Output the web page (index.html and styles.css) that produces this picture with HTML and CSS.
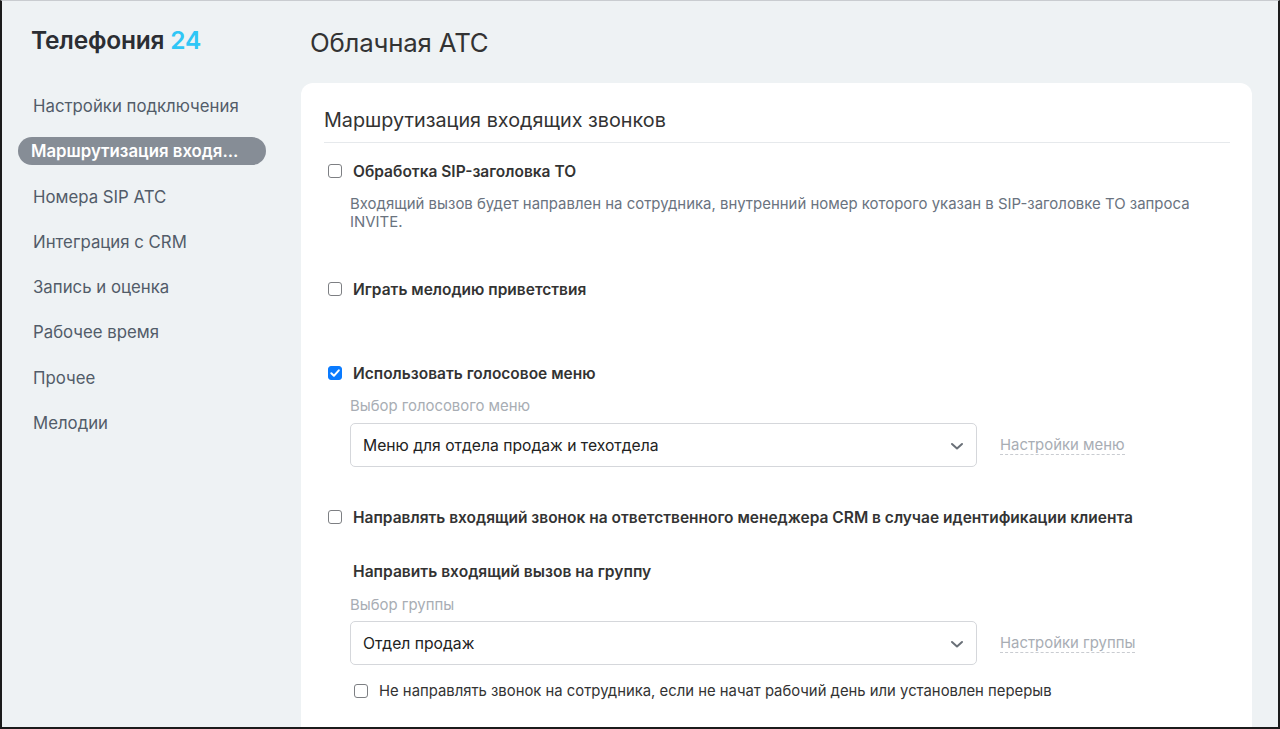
FILE: index.html
```html
<!DOCTYPE html>
<html lang="ru">
<head>
<meta charset="utf-8">
<title>Облачная АТС</title>
<link rel="stylesheet" href="styles.css">
</head>
<body>
<div class="frame">
  <aside class="sidebar">
    <div class="logo">Телефония <span class="logo-num">24</span></div>
    <nav class="nav">
      <a class="nav-item">Настройки подключения</a>
      <a class="nav-item active">Маршрутизация входя...</a>
      <a class="nav-item">Номера SIP АТС</a>
      <a class="nav-item">Интеграция с CRM</a>
      <a class="nav-item">Запись и оценка</a>
      <a class="nav-item">Рабочее время</a>
      <a class="nav-item">Прочее</a>
      <a class="nav-item">Мелодии</a>
    </nav>
  </aside>
  <main class="main">
    <h1 class="page-title">Облачная АТС</h1>
    <section class="card">
      <h2 class="card-title">Маршрутизация входящих звонков</h2>

      <label class="check-row sec-1"><input type="checkbox" class="cb"><span class="check-label">Обработка SIP-заголовка ТО</span></label>
      <p class="desc">Входящий вызов будет направлен на сотрудника, внутренний номер которого указан в SIP-заголовке ТО запроса INVITE.</p>

      <label class="check-row sec-2"><input type="checkbox" class="cb"><span class="check-label">Играть мелодию приветствия</span></label>

      <label class="check-row sec-3"><input type="checkbox" class="cb" checked><span class="check-label">Использовать голосовое меню</span></label>
      <div class="field">
        <div class="field-label">Выбор голосового меню</div>
        <div class="field-row">
          <div class="select"><span>Меню для отдела продаж и техотдела</span>
            <svg class="chev" width="14" height="9" viewBox="0 0 14 9"><path d="M2 2 L7 6.5 L12 2" fill="none" stroke="#6a7078" stroke-width="2" stroke-linecap="round" stroke-linejoin="round"/></svg>
          </div>
          <a class="dash-link">Настройки меню</a>
        </div>
      </div>

      <label class="check-row sec-4"><input type="checkbox" class="cb"><span class="check-label">Направлять входящий звонок на ответственного менеджера CRM в случае идентификации клиента</span></label>

      <div class="group-title">Направить входящий вызов на группу</div>
      <div class="field field-group">
        <div class="field-label">Выбор группы</div>
        <div class="field-row">
          <div class="select"><span>Отдел продаж</span>
            <svg class="chev" width="14" height="9" viewBox="0 0 14 9"><path d="M2 2 L7 6.5 L12 2" fill="none" stroke="#6a7078" stroke-width="2" stroke-linecap="round" stroke-linejoin="round"/></svg>
          </div>
          <a class="dash-link">Настройки группы</a>
        </div>
      </div>
      <label class="check-row small-row"><input type="checkbox" class="cb"><span class="small-label">Не направлять звонок на сотрудника, если не начат рабочий день или установлен перерыв</span></label>
    </section>
  </main>
</div>
</body>
</html>
```

FILE: styles.css
```css
* { box-sizing: border-box; }
html, body { margin: 0; padding: 0; height: 100%; overflow: hidden; }
body {
  font-family: Inter, "Noto Sans", sans-serif;
  background: #eef2f4;
  color: #333;
}
.frame {
  height: 729px;
  display: flex;
  border-left: 2px solid #1b1b1b;
  border-right: 2px solid #1b1b1b;
  border-bottom: 2px solid #1b1b1b;
  border-top: 1px solid #c9ccd0;
  overflow: hidden;
}
.sidebar {
  width: 299px;
  flex: none;
  padding: 23px 0 0 16px;
}
.logo {
  font-size: 24.5px;
  font-weight: 600;
  color: #2b2e33;
  padding-left: 13px;
  line-height: 32px;
  letter-spacing: -0.2px;
}
.logo-num { color: #2fc6f6; }
.nav {
  display: flex;
  flex-direction: column;
  margin-top: 36px;
  gap: 17.3px;
}
.nav-item {
  display: block;
  width: 248px;
  height: 28px;
  line-height: 28px;
  padding-left: 15px;
  font-size: 16.8px;
  color: #525c69;
  border-radius: 14px;
  white-space: nowrap;
}
.nav-item.active {
  background: #868d96;
  color: #fff;
  font-weight: 600;
  padding-left: 13px;
}
.main {
  flex: 1;
  display: flex;
  flex-direction: column;
  padding-right: 26px;
}
.page-title {
  margin: 26px 0 0 9px;
  font-size: 25.8px;
  font-weight: 400;
  line-height: 32px;
  color: #333;
  letter-spacing: -0.2px;
}
.card {
  margin-top: 24px;
  flex: 1;
  background: #fff;
  border-radius: 12px 12px 0 0;
  padding: 0 22px 0 23px;
}
.card-title {
  margin: 25px 0 0;
  font-size: 19.8px;
  font-weight: 400;
  line-height: 24px;
  color: #333;
  padding-bottom: 10px;
  border-bottom: 1px solid #e6e9ec;
}
.check-row {
  display: flex;
  align-items: center;
  height: 20px;
  padding-left: 4px;
}
.cb {
  appearance: none;
  -webkit-appearance: none;
  margin: 0 11px 0 0;
  width: 14px;
  height: 14px;
  border: 1.2px solid #7d7f83;
  border-radius: 3px;
  background: #fff;
  flex: none;
}
.cb:checked {
  background: #0a7bff url("data:image/svg+xml,%3Csvg xmlns='http://www.w3.org/2000/svg' viewBox='0 0 14 14'%3E%3Cpath d='M3.3 7.3 L5.9 9.8 L10.8 4.3' fill='none' stroke='white' stroke-width='2' stroke-linecap='round' stroke-linejoin='round'/%3E%3C/svg%3E") center/14px 14px no-repeat;
  border-color: #0a7bff;
}
.check-label {
  font-size: 15.5px;
  font-weight: 600;
  color: #333;
}
.sec-1 { margin-top: 18px; }
.desc {
  margin: 14px 0 0 26px;
  font-size: 14.95px;
  line-height: 18px;
  color: #6a737f;
  max-width: 860px;
}
.sec-2 { margin-top: 48px; }
.sec-3 { margin-top: 64px; }
.field { margin: 14px 0 0 26px; }
.field-label {
  font-size: 14.9px;
  line-height: 18px;
  color: #a8adb4;
}
.field-row {
  display: flex;
  align-items: center;
  margin-top: 8px;
}
.select {
  width: 627px;
  height: 44px;
  border: 1px solid #d5d7db;
  border-radius: 5px;
  display: flex;
  align-items: center;
  justify-content: space-between;
  padding: 1px 12px 0 12px;
  font-size: 15.7px;
  color: #222;
}
.chev { margin-top: 1px; }
.dash-link {
  margin-left: 23px;
  font-size: 14.9px;
  color: #a8adb4;
  line-height: 18px;
  border-bottom: 1px dashed #c9ccd1;
}
.sec-4 { margin-top: 40px; }
.group-title {
  margin: 35px 0 0 29px;
  font-size: 15.6px;
  font-weight: 600;
  line-height: 20px;
  color: #333;
}
.field-group { margin-top: 14px; }
.field-group .field-row { margin-top: 7px; }
.small-row { margin-top: 16px; padding-left: 30px; }
.small-label {
  font-size: 14.85px;
  color: #333;
}
```
